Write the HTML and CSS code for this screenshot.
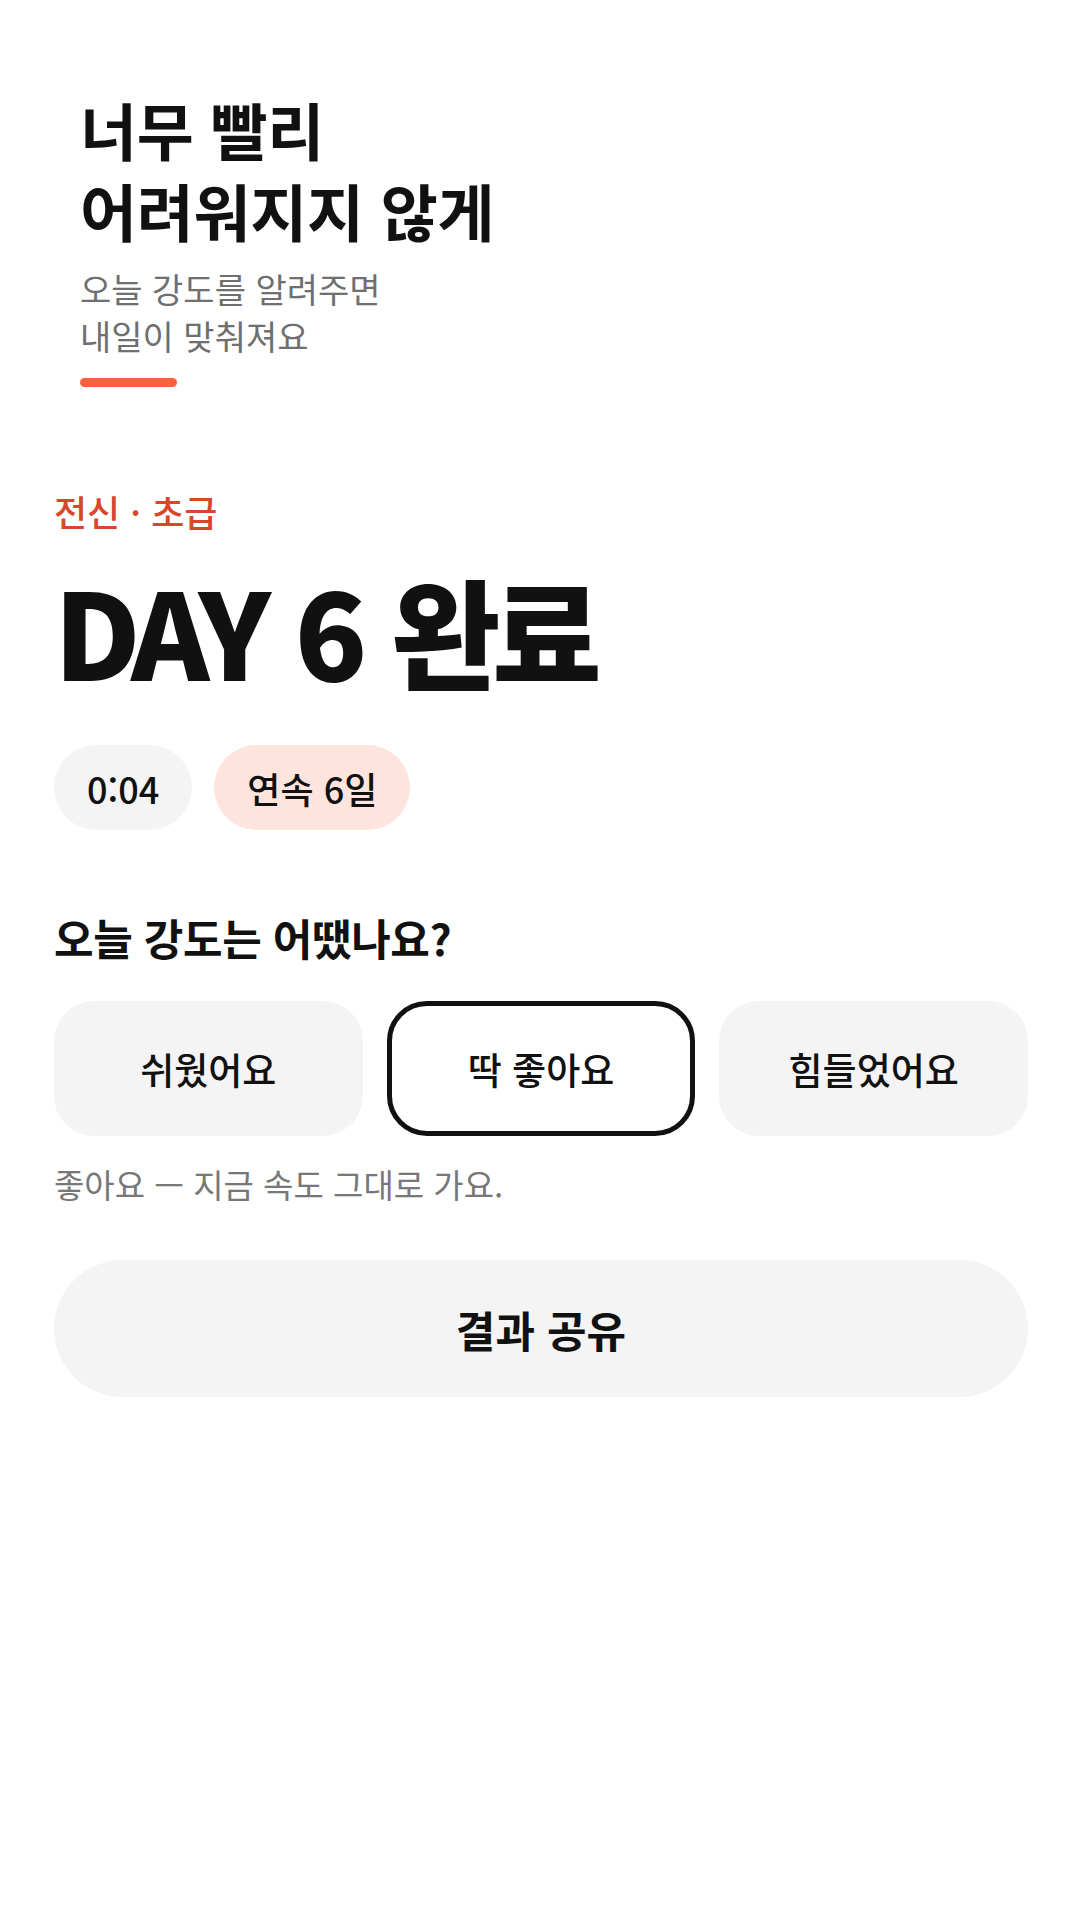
FILE: index.html
```html
<!DOCTYPE html>
<html lang="ko">
<head>
    <meta charset="UTF-8">
    <meta name="viewport" content="width=device-width, initial-scale=1.0">
    <title>DAY 6 완료</title>
    <link rel="stylesheet" href="styles.css">
</head>
<body>
    <div class="page">
        <div class="intro">
            <h1>너무 빨리<br>어려워지지 않게</h1>
            <p class="intro-sub">오늘 강도를 알려주면<br>내일이 맞춰져요</p>
            <div class="intro-bar"></div>
        </div>

        <div class="result">
            <div class="result-meta">전신 · 초급</div>
            <div class="result-title">DAY 6 완료</div>
            <div class="chips">
                <span class="chip">0:04</span>
                <span class="chip chip-streak">연속 6일</span>
            </div>
        </div>

        <div class="feedback">
            <h2>오늘 강도는 어땠나요?</h2>
            <div class="options">
                <button class="option">쉬웠어요</button>
                <button class="option selected">딱 좋아요</button>
                <button class="option">힘들었어요</button>
            </div>
            <p class="hint">좋아요 — 지금 속도 그대로 가요.</p>
        </div>

        <button class="share">결과 공유</button>
    </div>
</body>
</html>
```

FILE: styles.css
```css
body {
    margin: 0;
    background: #fff;
    color: #111;
    font-family: "Noto Sans CJK KR", "Noto Sans", sans-serif;
}
.page {
    padding: 0 52px 0 54px;
}
.intro {
    padding: 89px 26px 0;
}
.intro h1 {
    margin: 0;
    font-size: 62px;
    line-height: 1.3;
    font-weight: 700;
    letter-spacing: -0.005em;
}
.intro-sub {
    margin: 16px 0 0;
    font-size: 34px;
    line-height: 1.37;
    color: #6f6f6f;
}
.intro-bar {
    width: 97px;
    height: 9px;
    margin-top: 19px;
    border-radius: 5px;
    background: #ff5f3f;
}
.result {
    margin-top: 98px;
}
.result-meta {
    font-size: 36px;
    font-weight: 500;
    color: #d8472a;
}
.result-title {
    margin-top: 27px;
    font-size: 119px;
    line-height: 1.1;
    font-weight: 900;
    letter-spacing: -0.07em;
    word-spacing: 0.06em;
}
.chips {
    display: flex;
    gap: 22px;
    margin-top: 50px;
}
.chip {
    display: flex;
    align-items: center;
    height: 85px;
    padding: 0 33px;
    border-radius: 43px;
    background: #f4f4f4;
    font-size: 36px;
    font-weight: 500;
}
.chip-streak {
    background: #fde5de;
}
.feedback {
    margin-top: 76px;
}
.feedback h2 {
    margin: 0;
    font-size: 43px;
    font-weight: 700;
    letter-spacing: -0.01em;
}
.options {
    display: grid;
    grid-template-columns: repeat(3, 1fr);
    gap: 24px;
    margin-top: 33px;
}
.option {
    height: 135px;
    border: 5px solid transparent;
    border-radius: 40px;
    background: #f4f4f4;
    color: #111;
    font-family: inherit;
    font-size: 37px;
    font-weight: 500;
}
.option.selected {
    border-color: #111;
    background: #fff;
}
.hint {
    margin: 24px 0 0;
    font-size: 33px;
    color: #777;
}
.share {
    display: block;
    width: 100%;
    height: 137px;
    margin-top: 52px;
    border: none;
    border-radius: 69px;
    background: #f4f4f4;
    color: #111;
    font-family: inherit;
    font-size: 43px;
    font-weight: 700;
}
```
